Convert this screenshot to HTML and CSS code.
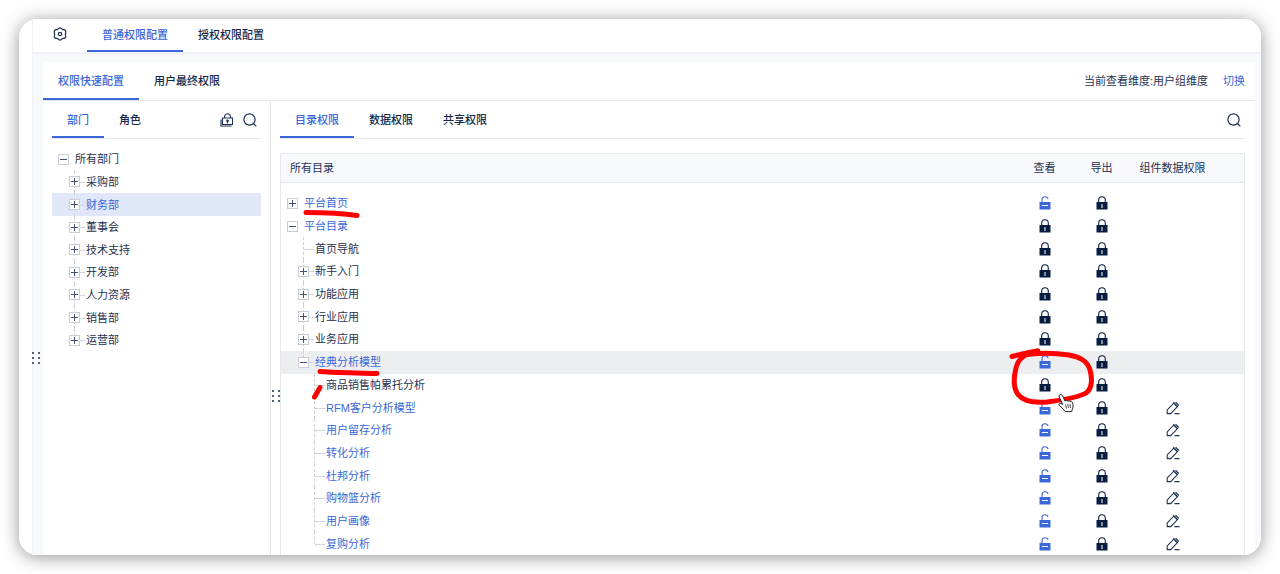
FILE: index.html
```html
<!DOCTYPE html>
<html lang="zh-CN">
<head>
    <meta charset="UTF-8">
    <title>权限配置</title>
    <link rel="stylesheet" href="styles.css">
</head>
<body>
    <svg class="sprite" aria-hidden="true">
        <symbol id="icon-lock" viewBox="0 0 12 14">
            <path d="M2.700 6V4.200a3.300 3.400 0 0 1 6.600 0V6" fill="none" stroke="currentColor" stroke-width="1.1"/>
            <path fill="currentColor" fill-rule="evenodd" d="M.5 6h11v7.500H.5zM5.500 8v4h1V8z"/>
        </symbol>
        <symbol id="icon-unlock" viewBox="0 0 12 14">
            <path d="M3 6V4c0-2 1.300-3.200 3-3.200 1.600 0 2.800.9 3 2.200" fill="none" stroke="currentColor" stroke-width="1.1"/>
            <path fill="currentColor" fill-rule="evenodd" d="M.5 6h11v7.500H.5zM3 9v1h6V9z"/>
        </symbol>
        <symbol id="icon-edit" viewBox="0 0 14 14">
            <path d="M1.200 12.600V8.900L7.700 2.200l3.600 3.600-6.600 6.800zM7.400 1.100l4.600 4.700M9.600 1.200l3.200 3.300M8.500 12.600H13.500" fill="none" stroke="currentColor" stroke-width="1.1"/>
        </symbol>
        <symbol id="icon-search" viewBox="0 0 14 14">
            <circle cx="6.500" cy="6.500" r="5.600" fill="none" stroke="currentColor" stroke-width="1.2"/>
            <path d="M10.500 10.500l2.800 2.800" fill="none" stroke="currentColor" stroke-width="1.2"/>
        </symbol>
    </svg>

    <div class="window">
        <div class="app">
            <div class="topbar">
                <button class="icon-btn gear" aria-label="设置">
                    <svg width="14" height="14" viewBox="0 0 14 14" fill="none" stroke="currentColor" stroke-width="1.2" stroke-linejoin="round">
                        <path d="M5.300 1.700L7 .7l1.700 1 .9 1h2L12.700 4v2L12.100 7l.6 1v2l-1.100 1.300h-2l-.9 1-1.700 1-1.700-1-.9-1h-2L1.300 10V8L1.900 7l-.6-1V4l1.100-1.300h2z"/>
                        <circle cx="7" cy="7" r="1.700"/>
                    </svg>
                </button>
                <nav class="tabs">
                    <button class="tab active">普通权限配置</button>
                    <button class="tab">授权权限配置</button>
                </nav>
            </div>

            <div class="card">
                <div class="card-head">
                    <nav class="tabs">
                        <button class="tab active">权限快速配置</button>
                        <button class="tab">用户最终权限</button>
                    </nav>
                    <div class="dimension">
                        <span>当前查看维度:用户组维度</span>
                        <a href="#">切换</a>
                    </div>
                </div>

                <div class="panels">
                    <aside class="side">
                        <div class="panel-head">
                            <nav class="tabs">
                                <button class="tab active">部门</button>
                                <button class="tab">角色</button>
                            </nav>
                            <div class="tools">
                                <button class="icon-btn" aria-label="批量授权">
                                    <svg width="14" height="14" viewBox="0 0 14 14" fill="none" stroke="currentColor" stroke-width="1.1">
                                        <path d="M4.500 5V3.800a3 3 0 0 1 6 0V5M2.500 5h10v6.500h-10zM1 6.500V13h10.500M7.500 8.500v2"/>
                                        <circle cx="7.500" cy="7.800" r=".8" fill="currentColor"/>
                                    </svg>
                                </button>
                                <button class="icon-btn" aria-label="搜索"><svg width="14" height="14"><use href="#icon-search"/></svg></button>
                            </div>
                        </div>
                        <ul class="dept-tree" id="dept-tree"></ul>
                    </aside>

                    <section class="main">
                        <div class="panel-head">
                            <nav class="tabs">
                                <button class="tab active">目录权限</button>
                                <button class="tab">数据权限</button>
                                <button class="tab">共享权限</button>
                            </nav>
                            <div class="tools">
                                <button class="icon-btn" aria-label="搜索"><svg width="14" height="14"><use href="#icon-search"/></svg></button>
                            </div>
                        </div>
                        <table class="dir-table">
                            <thead>
                                <tr>
                                    <th>所有目录</th>
                                    <th>查看</th>
                                    <th>导出</th>
                                    <th>组件数据权限</th>
                                </tr>
                            </thead>
                            <tbody id="dir-rows"></tbody>
                        </table>
                        <span class="grip"></span>
                    </section>
                </div>
            </div>
        </div>
        <span class="grip"></span>
    </div>

    <!-- hand-drawn marks and the pointer -->
    <svg class="marks" width="1280" height="574" viewBox="0 0 1280 574" aria-hidden="true">
        <g fill="none" stroke="#ff0000" stroke-width="5" stroke-linecap="round" stroke-linejoin="round">
            <path d="M306 212.500C324 212.500 341 213 357 215.500"/>
            <path d="M320 371.500C339 373 358 373 377 373.500"/>
            <path d="M314.500 397L320 387.500"/>
            <path d="M1012 356.500C1022 354 1030 352 1038 351C1024 353 1018 359 1016 368C1014 376 1013 386 1017 393C1022 401 1034 403 1047 402C1061 400 1078 398 1086 393C1093 388 1092 377 1090 370C1087 360 1079 357 1069 355C1055 353 1036 353 1023 355"/>
        </g>
        <path d="M1059.500 395c1.500-1 2.700 0 3.200 1l2.300 5c1-1 2.300-.7 2.700.2 1-.8 2.200-.4 2.500.5 1-.5 2 0 2.300 1 .8 2.500.8 4.800-.4 7.300l-.4 1.600h-6.500c-1.600-2.600-3.800-4.200-5.900-6.200-1-1.200.2-2.500 1.600-2l1.700.9-3.400-7.300c-.3-.8-.2-1.600.3-2z" fill="#fff" stroke="#222" stroke-width="1"/>
        <path d="M1065.500 404.500l1 4M1067.700 404l.8 4M1070 404l.5 4" fill="none" stroke="#222" stroke-width=".8"/>
    </svg>

    <script src="app.js"></script>
</body>
</html>
```

FILE: styles.css
```css
* {
    box-sizing: border-box;
}

body {
    margin: 0;
    height: 100vh;
    padding: 19px;
    background-color: #fff;
    color: #1f3151;
    font-family: "Liberation Sans", "Noto Sans CJK SC", sans-serif;
    font-size: 11px;
    line-height: 16px;
    overflow: hidden;
}

button {
    margin: 0;
    padding: 0;
    border: none;
    background: none;
    color: inherit;
    font: inherit;
    cursor: pointer;
}

a {
    color: #3a68d9;
    text-decoration: none;
}

.sprite {
    display: none;
}

.window {
    position: relative;
    height: 100%;
    padding-left: 13px;
    border-radius: 18px;
    background-color: #fff;
    box-shadow: 0 2px 18px rgba(0, 0, 0, 0.42);
}

.app {
    display: flex;
    flex-direction: column;
    height: 100%;
    border-left: 1px solid #f1f3f5;
    border-radius: 0 18px 18px 0;
    background-color: #f7f9fd;
    overflow: hidden;
}

.topbar {
    display: flex;
    align-items: stretch;
    gap: 20px;
    height: 35px;
    padding-left: 20px;
    border-bottom: 2px solid #f0f1f4;
    background-color: #fff;
}

.icon-btn {
    display: flex;
    align-items: center;
    justify-content: center;
}

.icon-btn svg {
    display: block;
}

.gear {
    height: 29px;
}

/* tabs */
.tabs {
    display: flex;
}

.tab {
    padding: 0 15px;
    border-bottom: 2px solid transparent;
    font-family: "Noto Sans CJK SC", sans-serif;
    font-weight: 500;
    color: #14284a;
}

.tab.active {
    color: #3a68d9;
    border-bottom-color: #3a68d9;
}

.topbar .tab {
    padding-bottom: 2px;
}

.card {
    display: flex;
    flex-direction: column;
    flex: 1;
    min-height: 0;
    margin: 8px 6px 0 10px;
    background-color: #fff;
}

.card-head {
    display: flex;
    justify-content: space-between;
    height: 39px;
    padding-right: 10px;
    border-bottom: 1px solid #e3e5eb;
}

.dimension {
    display: flex;
    align-items: center;
    gap: 15px;
}

.panels {
    display: flex;
    flex: 1;
    min-height: 0;
}

.side {
    display: flex;
    flex-direction: column;
    width: 228px;
    padding: 0 9px;
    border-right: 1px solid #e3e5eb;
}

.main {
    position: relative;
    display: flex;
    flex-direction: column;
    flex: 1;
    min-width: 0;
    padding: 0 10px 0 9px;
}

.panel-head {
    display: flex;
    justify-content: space-between;
    flex: none;
    height: 38px;
    border-bottom: 1px solid #eaebef;
}

.tools {
    display: flex;
    align-items: center;
    gap: 9px;
    padding-right: 4px;
}

/* department tree */
.dept-tree {
    display: grid;
    flex: 1;
    grid-template-rows: repeat(18, 1fr);
    min-height: 0;
    margin: 0;
    padding: 9px 0 0;
    list-style: none;
}

.dept-tree li {
    display: flex;
    padding-left: 6px;
}

.dept-tree li.selected {
    background-color: #e0e7f8;
    color: #3a68d9;
}

/* tree node: guide column + toggle + label */
.node {
    display: flex;
    align-items: center;
    height: 100%;
}

.indent {
    width: 11px;
}

.toggle-box {
    position: relative;
    display: flex;
    align-items: center;
    align-self: stretch;
    width: 17px;
}

.child .toggle-box::before {
    content: "";
    position: absolute;
    top: 0;
    bottom: 0;
    left: 5px;
    border-left: 1px dashed #ccd0d8;
}

.child.last .toggle-box::before {
    bottom: 50%;
}

.child .toggle-box::after {
    content: "";
    position: absolute;
    top: 50%;
    left: 6px;
    right: 1px;
    border-top: 1px dashed #ccd0d8;
}

.toggle {
    position: relative;
    z-index: 1;
    width: 11px;
    height: 11px;
    border: 1px solid #c9cdd6;
    background: linear-gradient(#44536f, #44536f) center / 7px 1px no-repeat, #fff;
}

.toggle.plus {
    background: linear-gradient(#44536f, #44536f) center / 7px 1px no-repeat,
        linear-gradient(#44536f, #44536f) center / 1px 7px no-repeat, #fff;
}

/* directory table */
.dir-table {
    display: flex;
    flex-direction: column;
    flex: 1;
    min-height: 0;
    margin-top: 14px;
    border: 1px solid #e6e8ed;
    border-bottom: none;
}

.dir-table thead {
    border-bottom: 1px solid #e3e5eb;
    background-color: #f7f9fd;
    display: block;
}

.dir-table tr {
    display: grid;
    grid-template-columns: 1fr 57px 57px 85px;
    padding-right: 29px;
}

.dir-table thead tr {
    height: 28px;
    align-items: center;
}

.dir-table th {
    padding: 0;
    font-weight: 400;
    text-align: center;
}

.dir-table th:first-child {
    padding-left: 9px;
    text-align: left;
}

.dir-table tbody {
    display: grid;
    grid-auto-rows: 1fr;
    flex: 1;
    min-height: 0;
    padding-top: 9px;
}

.dir-table td {
    display: flex;
    align-items: center;
    justify-content: center;
    min-height: 0;
    padding: 0;
}

.dir-table td:first-child {
    justify-content: flex-start;
    padding-left: 6px;
}

.dir-table tr.hover {
    background-color: #edeef0;
}

.open {
    color: #3a68d9;
}

.locked {
    color: #071d40;
}

/* drag handle on the left edge of a pane */
.grip {
    position: absolute;
    top: 332px;
    left: 12px;
    width: 12px;
    height: 15px;
    background: radial-gradient(circle at 2px 2px, #52617b 1px, transparent 1px) 0 0 / 6px 5px;
}

.main .grip {
    top: 288px;
    left: 0;
    width: 10px;
}

.marks {
    position: absolute;
    top: 0;
    left: 0;
    pointer-events: none;
}
```

FILE: app.js
```js
var departments = ["所有部门", "采购部", "财务部", "董事会", "技术支持", "开发部", "人力资源", "销售部", "运营部"];

// name, depth, toggle (+ / - / none), view open, has component permission
var directories = [
    ["平台首页", 0, "+", true, false],
    ["平台目录", 0, "-", false, false],
    ["首页导航", 1, "", false, false],
    ["新手入门", 1, "+", false, false],
    ["功能应用", 1, "+", false, false],
    ["行业应用", 1, "+", false, false],
    ["业务应用", 1, "+", false, false],
    ["经典分析模型", 1, "-", true, false],
    ["商品销售帕累托分析", 2, "", false, false],
    ["RFM客户分析模型", 2, "", true, true],
    ["用户留存分析", 2, "", true, true],
    ["转化分析", 2, "", true, true],
    ["杜邦分析", 2, "", true, true],
    ["购物篮分析", 2, "", true, true],
    ["用户画像", 2, "", true, true],
    ["复购分析", 2, "", true, true]
];

function node(name, depth, toggle, last) {
    var html = '<div class="node' + (depth ? " child" : "") + (last ? " last" : "") + '">';
    for (var i = 0; i < depth; i++) {
        html += '<span class="indent"></span>';
    }
    html += '<span class="toggle-box">';
    if (toggle) {
        html += '<button class="toggle' + (toggle === "+" ? " plus" : "") + '" aria-label="' + (toggle === "+" ? "展开" : "收起") + '"></button>';
    }
    return html + "</span><span>" + name + "</span></div>";
}

function iconButton(icon, label, cls) {
    return '<button class="icon-btn ' + cls + '" aria-label="' + label + '">' +
        '<svg width="' + (icon === "edit" ? 14 : 12) + '" height="14"><use href="#icon-' + icon + '"/></svg></button>';
}

document.getElementById("dept-tree").innerHTML = departments.map(function (name, i) {
    var last = i === departments.length - 1;
    return "<li" + (name === "财务部" ? ' class="selected"' : "") + ">" + node(name, i ? 1 : 0, i ? "+" : "-", last) + "</li>";
}).join("");

document.getElementById("dir-rows").innerHTML = directories.map(function (d, i) {
    var last = i === directories.length - 1 || d[0] === "经典分析模型";
    var blue = d[3] || d[0] === "平台目录";
    return "<tr" + (d[0] === "经典分析模型" ? ' class="hover"' : "") + ">" +
        '<td' + (blue ? ' class="open"' : "") + ">" + node(d[0], d[1], d[2], last) + "</td>" +
        "<td>" + (d[3] ? iconButton("unlock", "查看", "open") : iconButton("lock", "查看", "locked")) + "</td>" +
        "<td>" + iconButton("lock", "导出", "locked") + "</td>" +
        "<td>" + (d[4] ? iconButton("edit", "编辑", "") : "") + "</td></tr>";
}).join("");
```
